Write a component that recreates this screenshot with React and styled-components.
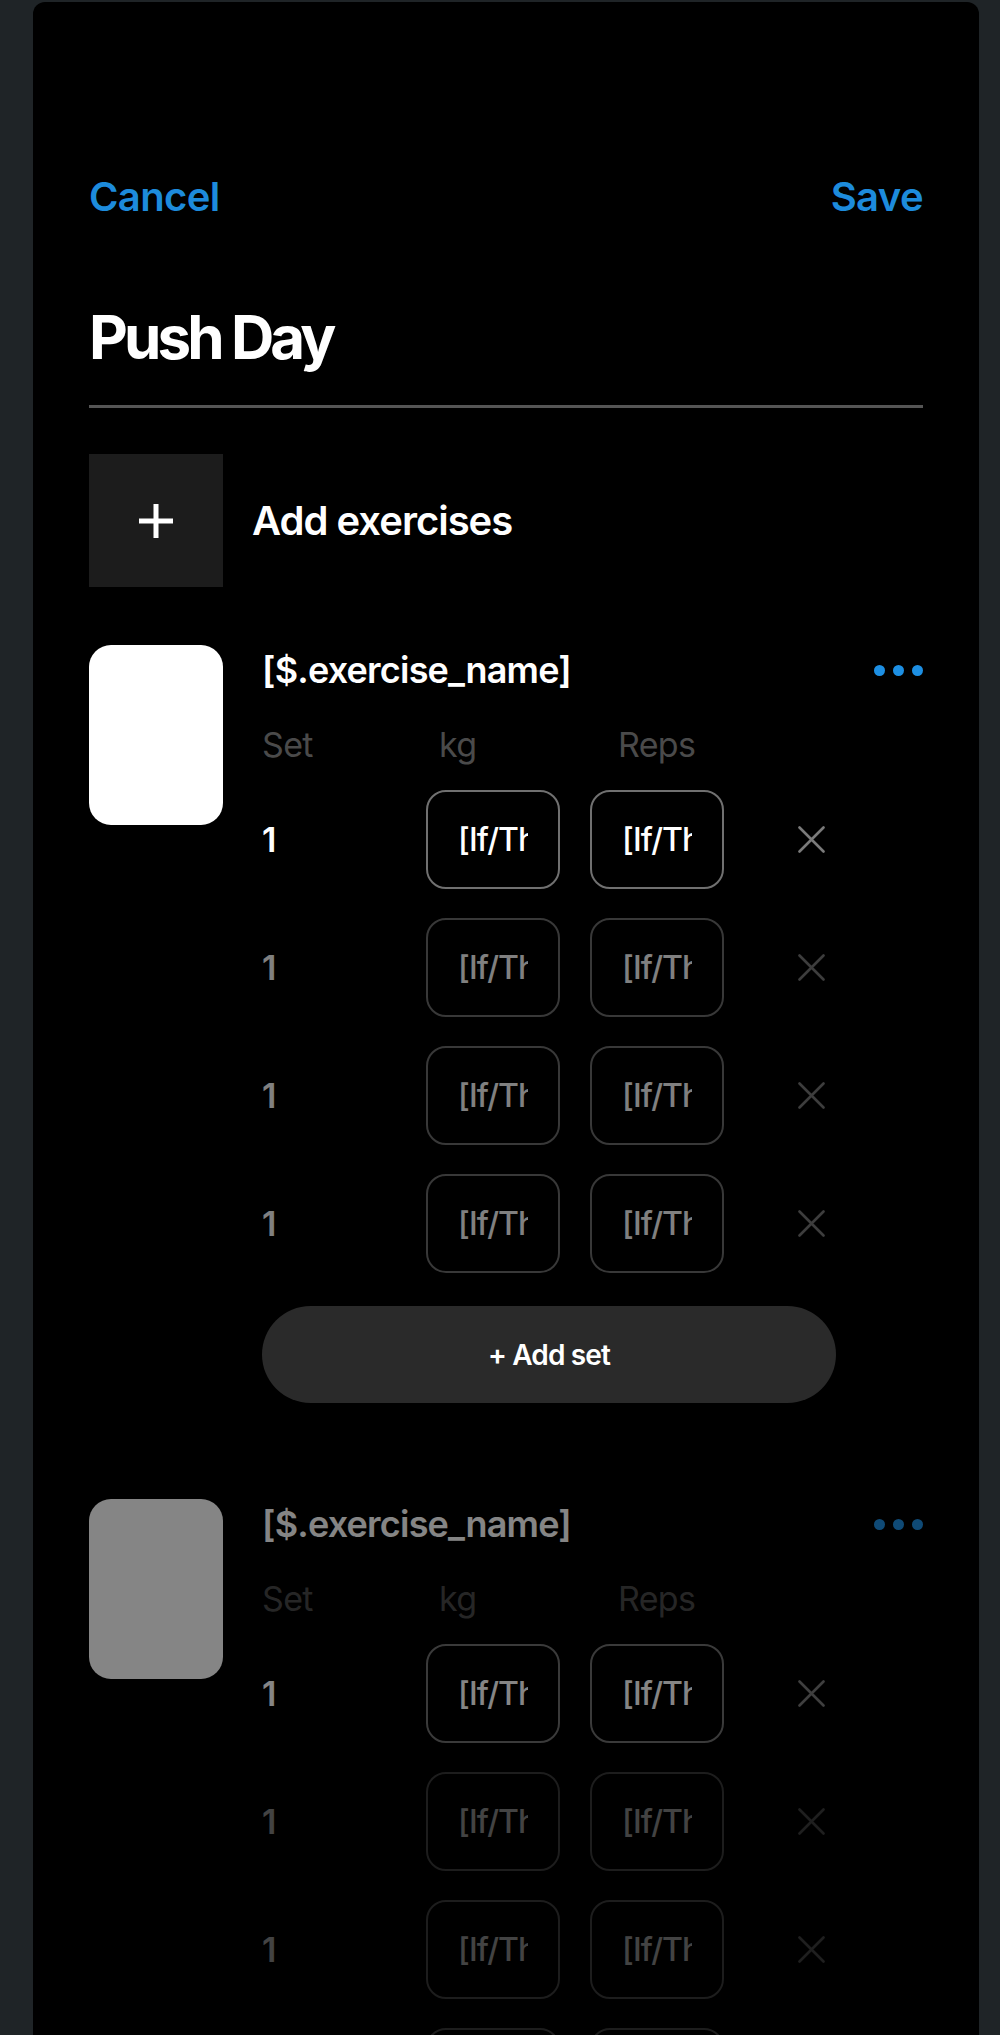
import React from 'react';
import styled, { createGlobalStyle } from 'styled-components';

const GlobalStyle = createGlobalStyle`
  html, body {
    margin: 0;
    padding: 0;
    background: #1f2427;
  }
  body {
    font-family: Inter, "Noto Sans", "Liberation Sans", sans-serif;
    -webkit-font-smoothing: antialiased;
  }
  #root {
    height: 100vh;
    overflow: hidden;
  }
`;

const Page = styled.div`
  padding: 2px 0 0 33px;
  height: 100%;
  box-sizing: border-box;
`;

const Panel = styled.div`
  width: 946px;
  min-height: 2200px;
  box-sizing: border-box;
  background: #000;
  border-radius: 12px 12px 0 0;
  padding: 171px 56px 0 56px;
`;

const TopBar = styled.div`
  display: flex;
  justify-content: space-between;
  align-items: center;
  height: 48px;
`;

const TextLink = styled.button`
  background: none;
  border: 0;
  padding: 0;
  font-family: inherit;
  font-size: 40px;
  line-height: 48px;
  font-weight: 600;
  letter-spacing: -0.015em;
  color: #1d8bdc;
  cursor: pointer;
`;

const Title = styled.div`
  margin-top: 80px;
  font-size: 60px;
  line-height: 72px;
  font-weight: 700;
  letter-spacing: -0.065em;
  color: #fff;
  padding-bottom: 32px;
  border-bottom: 3px solid #555;
`;

const AddRow = styled.div`
  margin-top: 46px;
  display: flex;
  align-items: center;
  gap: 29px;
`;

const AddTile = styled.div`
  width: 134px;
  height: 133px;
  background: #1c1c1c;
  display: flex;
  align-items: center;
  justify-content: center;
`;

const AddLabel = styled.div`
  font-size: 40px;
  line-height: 48px;
  font-weight: 600;
  letter-spacing: -0.025em;
  color: #fff;
`;

const ExerciseList = styled.div`
  margin-top: 58px;
  display: flex;
  flex-direction: column;
  gap: 96px;
`;

const Exercise = styled.div`
  display: flex;
  gap: 39px;
  opacity: ${(p) => (p.$dim ? 0.52 : 1)};
`;

const Thumb = styled.div`
  flex-shrink: 0;
  width: 134px;
  height: 180px;
  border-radius: 22px;
  background: #fff;
`;

const ExerciseBody = styled.div`
  flex: 1;
  display: flex;
  flex-direction: column;
`;

const NameRow = styled.div`
  display: flex;
  justify-content: space-between;
  align-items: center;
  height: 50px;
`;

const Name = styled.div`
  font-size: 36px;
  line-height: 50px;
  font-weight: 600;
  letter-spacing: -0.022em;
  color: #fff;
`;

const Dots = styled.div`
  display: flex;
  gap: 8px;
`;

const Dot = styled.span`
  width: 11px;
  height: 11px;
  border-radius: 50%;
  background: #1d8fe3;
`;

const HeaderRow = styled.div`
  margin-top: 30px;
  display: grid;
  grid-template-columns: 177px 179px auto;
  font-size: 34px;
  line-height: 40px;
  font-weight: 400;
  letter-spacing: -0.02em;
  color: #4a4a4a;
`;

const SetList = styled.div`
  margin-top: 25px;
  display: flex;
  flex-direction: column;
  gap: 29px;
`;

const SetRow = styled.div`
  display: flex;
  align-items: center;
  height: 99px;
  opacity: ${(p) => (p.$active ? 1 : 0.5)};
`;

const SetNum = styled.div`
  width: 164px;
  font-size: 34px;
  font-weight: 600;
  color: #fff;
`;

const Field = styled.div`
  width: 134px;
  height: 99px;
  box-sizing: border-box;
  border: 2px solid #707070;
  border-radius: 20px;
  padding: 0 30px;
  display: flex;
  align-items: center;
  overflow: hidden;
  white-space: nowrap;
  font-size: 32px;
  font-weight: 500;
  letter-spacing: -0.03em;
  color: #fff;
  & + & {
    margin-left: 30px;
  }
`;

const FieldText = styled.span`
  display: block;
  overflow: hidden;
  width: 100%;
`;

const RemoveBtn = styled.div`
  margin-left: 74px;
  width: 27px;
  height: 27px;
  display: flex;
`;

const AddSetButton = styled.button`
  margin-top: 33px;
  width: 574px;
  height: 97px;
  border: 0;
  border-radius: 49px;
  background: #2a2a2a;
  color: #fff;
  font-family: inherit;
  font-size: 28px;
  font-weight: 600;
  letter-spacing: -0.03em;
  cursor: pointer;
`;

const PlusIcon = () => (
  <svg width="38" height="38" viewBox="0 0 38 38">
    <path d="M19 2 V36 M2 19 H36" stroke="#fff" strokeWidth="5" strokeLinecap="butt" />
  </svg>
);

const XIcon = () => (
  <svg width="27" height="27" viewBox="0 0 27 27">
    <path d="M1.5 1.5 L25.5 25.5 M25.5 1.5 L1.5 25.5" stroke="#7a7a7a" strokeWidth="2.6" strokeLinecap="round" />
  </svg>
);

const sets = [true, false, false, false];

const ExerciseBlock = ({ dim }) => (
  <Exercise $dim={dim}>
    <Thumb />
    <ExerciseBody>
      <NameRow>
        <Name>[$.exercise_name]</Name>
        <Dots>
          <Dot />
          <Dot />
          <Dot />
        </Dots>
      </NameRow>
      <HeaderRow>
        <span>Set</span>
        <span>kg</span>
        <span>Reps</span>
      </HeaderRow>
      <SetList>
        {sets.map((active, i) => (
          <SetRow key={i} $active={active}>
            <SetNum>1</SetNum>
            <Field>
              <FieldText>[If/Then]</FieldText>
            </Field>
            <Field>
              <FieldText>[If/Then]</FieldText>
            </Field>
            <RemoveBtn>
              <XIcon />
            </RemoveBtn>
          </SetRow>
        ))}
      </SetList>
      <AddSetButton>+ Add set</AddSetButton>
    </ExerciseBody>
  </Exercise>
);

export default function App() {
  return (
    <>
      <GlobalStyle />
      <Page>
        <Panel>
          <TopBar>
            <TextLink>Cancel</TextLink>
            <TextLink>Save</TextLink>
          </TopBar>
          <Title>Push Day</Title>
          <AddRow>
            <AddTile>
              <PlusIcon />
            </AddTile>
            <AddLabel>Add exercises</AddLabel>
          </AddRow>
          <ExerciseList>
            <ExerciseBlock />
            <ExerciseBlock dim />
          </ExerciseList>
        </Panel>
      </Page>
    </>
  );
}
